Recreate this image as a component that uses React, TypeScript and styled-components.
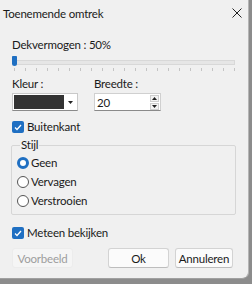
import styled, { createGlobalStyle } from "styled-components";

const GlobalStyle = createGlobalStyle`
  html, body {
    margin: 0;
    padding: 0;
    background: #8c8c8c;
  }
  * {
    box-sizing: border-box;
  }
`;

const Window = styled.div`
  width: 249px;
  height: 279px;
  background: #f0f0f0;
  border-radius: 0 0 7px 0;
  border-right: 1px solid #b5b5b5;
  border-bottom: 1px solid #a0a0a0;
  font-family: Lato, "Noto Sans", sans-serif;
  font-size: 11.5px;
  letter-spacing: -0.2px;
  color: #1a1a1a;
  display: flex;
  flex-direction: column;
`;

const TitleBar = styled.div`
  height: 26px;
  display: flex;
  align-items: center;
  justify-content: space-between;
  padding: 0 6px 0 3px;
`;

const Body = styled.div`
  display: flex;
  flex-direction: column;
  padding: 11px 12px 0 12px;
`;

const Label = styled.div`
  line-height: 16px;
`;

const SliderWrap = styled.div`
  position: relative;
  height: 18px;
  margin-top: 1px;
`;

const Track = styled.div`
  position: absolute;
  left: 2px;
  right: 1px;
  top: 6px;
  height: 5px;
  background: #e6e6e6;
  border: 1px solid #d8d8d8;
`;

const Thumb = styled.div`
  position: absolute;
  left: 0;
  top: 2px;
  width: 5px;
  height: 10px;
  background: #1f6fc2;
  border-radius: 1px 1px 3px 3px;
`;

const Ticks = styled.div`
  position: absolute;
  left: 2px;
  right: 1px;
  top: 14px;
  height: 3px;
  display: flex;
  justify-content: space-between;
`;

const Tick = styled.span`
  width: 1px;
  height: 3px;
  background: #c4c4c4;
`;

const FieldRow = styled.div`
  display: flex;
  gap: 16px;
  margin-top: 4px;
`;

const Field = styled.div`
  display: flex;
  flex-direction: column;
  gap: 1px;
`;

const ColorSelect = styled.div`
  width: 66px;
  height: 18px;
  display: flex;
  align-items: stretch;
  background: #fff;
  border: 1px solid #c9c9c9;
  border-bottom-color: #8a8a8a;
  padding: 1px;
`;

const Swatch = styled.div`
  flex: 1;
  background: #333;
  margin-right: 1px;
`;

const ArrowBox = styled.div`
  width: 11px;
  display: flex;
  align-items: center;
  justify-content: center;
`;

const SpinBox = styled.div`
  width: 67px;
  height: 18px;
  display: flex;
  align-items: center;
  justify-content: space-between;
  background: #fff;
  border: 1px solid #d0d0d0;
  border-bottom-color: #8a8a8a;
  padding-left: 2px;
`;

const SpinButtons = styled.div`
  display: flex;
  flex-direction: column;
  justify-content: center;
  gap: 1px;
  height: 100%;
  padding-right: 1px;
`;

const SpinBtn = styled.div`
  width: 9px;
  height: 7px;
  display: flex;
  align-items: center;
  justify-content: center;
  background: #f3f3f3;
  border: 1px solid #cfcfcf;
`;

const CheckRow = styled.label<{ $top: number }>`
  display: flex;
  align-items: center;
  gap: 3px;
  margin-top: ${(p) => p.$top}px;
  line-height: 16px;
`;

const CheckBox = styled.span`
  width: 12px;
  height: 12px;
  border-radius: 2px;
  background: #1f6fc2;
  display: flex;
  align-items: center;
  justify-content: center;
`;

const GroupBox = styled.fieldset`
  margin: 3px 0 0 -1px;
  padding: 3px 5px 5px 5px;
  border: 1px solid #d6d6d6;
  border-radius: 2px;
  display: flex;
  flex-direction: column;
  gap: 3px;
`;

const Legend = styled.legend`
  padding: 0 1px;
  margin-left: 3px;
  line-height: 14px;
`;

const RadioRow = styled.div`
  display: flex;
  align-items: center;
  gap: 2px;
  line-height: 16px;
`;

const Radio = styled.span<{ $on?: boolean }>`
  width: 12px;
  height: 12px;
  border-radius: 50%;
  border: ${(p) => (p.$on ? "3.5px solid #1f6fc2" : "1px solid #555")};
  background: #fff;
`;

const ButtonRow = styled.div`
  display: flex;
  margin-top: 7px;
`;

const Button = styled.div<{ $w: number; $ml?: number; $disabled?: boolean }>`
  width: ${(p) => p.$w}px;
  height: 20px;
  margin-left: ${(p) => p.$ml ?? 0}px;
  display: flex;
  align-items: center;
  justify-content: center;
  border-radius: 3px;
  background: ${(p) => (p.$disabled ? "#f5f5f5" : "#fbfbfb")};
  border: 1px solid ${(p) => (p.$disabled ? "#ececec" : "#d3d3d3")};
  border-bottom-color: ${(p) => (p.$disabled ? "#ececec" : "#bdbdbd")};
  color: ${(p) => (p.$disabled ? "#9d9d9d" : "#1a1a1a")};
`;

const ticks = Array.from({ length: 21 });

const Check = () => (
  <CheckBox>
    <svg width="8" height="7" viewBox="0 0 8 7">
      <path d="M1 3.5 L3 5.5 L7 1" stroke="#fff" strokeWidth="1.3" fill="none" />
    </svg>
  </CheckBox>
);

export default function App() {
  return (
    <>
      <GlobalStyle />
      <Window>
        <TitleBar>
          <span>Toenemende omtrek</span>
          <svg width="10" height="10" viewBox="0 0 10 10">
            <path d="M0.5 0.5 L9.5 9.5 M9.5 0.5 L0.5 9.5" stroke="#222" strokeWidth="1" />
          </svg>
        </TitleBar>
        <Body>
          <Label>Dekvermogen : 50%</Label>
          <SliderWrap>
            <Track />
            <Thumb />
            <Ticks>
              {ticks.map((_, i) => (
                <Tick key={i} />
              ))}
            </Ticks>
          </SliderWrap>

          <FieldRow>
            <Field>
              <Label>Kleur :</Label>
              <ColorSelect>
                <Swatch />
                <ArrowBox>
                  <svg width="5" height="3" viewBox="0 0 5 3">
                    <path d="M0 0 L5 0 L2.5 3 Z" fill="#222" />
                  </svg>
                </ArrowBox>
              </ColorSelect>
            </Field>
            <Field>
              <Label>Breedte :</Label>
              <SpinBox>
                <span>20</span>
                <SpinButtons>
                  <SpinBtn>
                    <svg width="5" height="3" viewBox="0 0 5 3">
                      <path d="M0 3 L5 3 L2.5 0 Z" fill="#222" />
                    </svg>
                  </SpinBtn>
                  <SpinBtn>
                    <svg width="5" height="3" viewBox="0 0 5 3">
                      <path d="M0 0 L5 0 L2.5 3 Z" fill="#222" />
                    </svg>
                  </SpinBtn>
                </SpinButtons>
              </SpinBox>
            </Field>
          </FieldRow>

          <CheckRow $top={8}>
            <Check />
            Buitenkant
          </CheckRow>

          <GroupBox>
            <Legend>Stijl</Legend>
            <RadioRow>
              <Radio $on />
              Geen
            </RadioRow>
            <RadioRow>
              <Radio />
              Vervagen
            </RadioRow>
            <RadioRow>
              <Radio />
              Verstrooien
            </RadioRow>
          </GroupBox>

          <CheckRow $top={10}>
            <Check />
            Meteen bekijken
          </CheckRow>

          <ButtonRow>
            <Button $w={61} $disabled>
              Voorbeeld
            </Button>
            <Button $w={61} $ml={35}>
              Ok
            </Button>
            <Button $w={58} $ml={6}>
              Annuleren
            </Button>
          </ButtonRow>
        </Body>
      </Window>
    </>
  );
}
